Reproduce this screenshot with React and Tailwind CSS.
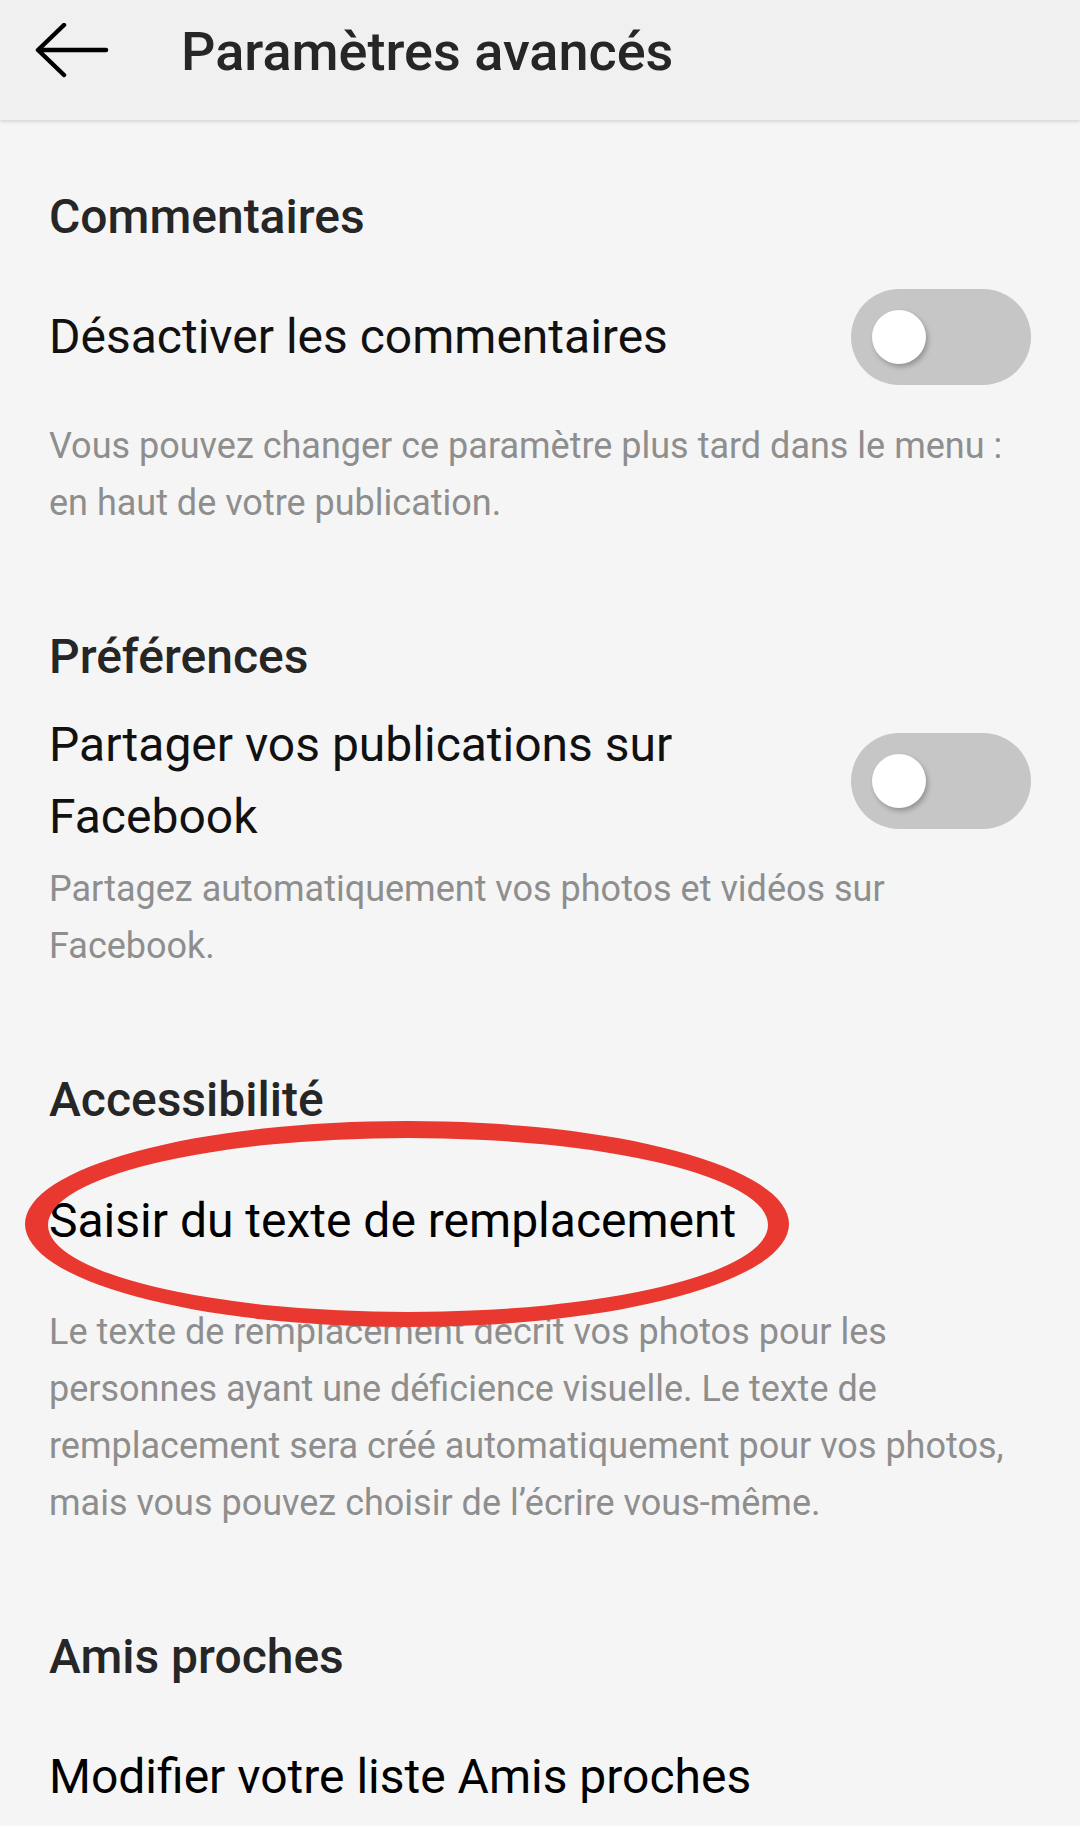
import React from "react";

const Toggle = () => (
  <div className="relative w-[180px] h-[96px] shrink-0 rounded-full bg-[#c6c6c6]">
    <div className="absolute left-[21px] top-[21px] w-[54px] h-[54px] rounded-full bg-white shadow-[2px_3px_5px_rgba(0,0,0,0.25)]" />
  </div>
);

const Heading = ({ children, className = "" }) => (
  <h2 className={`text-[48px] leading-[60px] font-medium text-[#262626] ${className}`}>
    {children}
  </h2>
);

const Desc = ({ children, className = "" }) => (
  <p className={`text-[36px] leading-[57px] text-[#8e8e8e] whitespace-nowrap ${className}`}>{children}</p>
);

export default function App() {
  return (
    <div className="min-h-[1826px] w-[1080px] bg-[#f5f5f5] font-['Roboto',sans-serif] overflow-hidden">
      <header className="relative z-10 h-[120px] pb-[18px] flex items-center bg-[#f0f0f0] shadow-[0_2px_3px_rgba(0,0,0,0.12)]">
        <svg className="ml-[35px]" width="74" height="56" viewBox="0 0 74 56" fill="none">
          <path d="M71 27H4M29 2L3 27l26 25" stroke="#000" strokeWidth="4.5" strokeLinecap="round" strokeLinejoin="round" />
        </svg>
        <h1 className="ml-[72px] text-[54px] font-medium text-[#262626]">Paramètres avancés</h1>
      </header>

      <main className="px-[49px]">
        <Heading className="mt-[67px]">Commentaires</Heading>
        <div className="mt-[42px] flex items-center justify-between">
          <span className="text-[48px] leading-[60px] text-[#111]">Désactiver les commentaires</span>
          <Toggle />
        </div>
        <Desc className="mt-[33px]">
          Vous pouvez changer ce paramètre plus tard dans le menu :<br />
          en haut de votre publication.
        </Desc>

        <Heading className="mt-[95px]">Préférences</Heading>
        <div className="mt-[22px] flex items-center justify-between">
          <span className="text-[48px] leading-[72px] text-[#111]">
            Partager vos publications sur
            <br />
            Facebook
          </span>
          <Toggle />
        </div>
        <Desc className="mt-[8px]">
          Partagez automatiquement vos photos et vidéos sur
          <br />
          Facebook.
        </Desc>

        <Heading className="mt-[95px]">Accessibilité</Heading>
        <div className="relative mt-[55px]">
          <span className="text-[48px] leading-[72px] text-[#000]">Saisir du texte de remplacement</span>
          <svg
            className="absolute left-[-25px] top-[-65px] pointer-events-none"
            width="766"
            height="208"
            viewBox="0 0 766 208"
          >
            <path
              fillRule="evenodd"
              fill="#e8382f"
              d="M1 104a382 103 0 1 0 764 0a382 103 0 1 0 -764 0Z M24 105a360 87 0 1 0 720 0a360 87 0 1 0 -720 0Z"
            />
          </svg>
        </div>
        <Desc className="mt-[47px]">
          Le texte de remplacement décrit vos photos pour les
          <br />
          personnes ayant une déficience visuelle. Le texte de
          <br />
          remplacement sera créé automatiquement pour vos photos,
          <br />
          mais vous pouvez choisir de l’écrire vous-même.
        </Desc>

        <Heading className="mt-[95px]">Amis proches</Heading>
        <div className="mt-[54px] text-[48px] leading-[72px] text-[#000]">Modifier votre liste Amis proches</div>
      </main>
    </div>
  );
}
